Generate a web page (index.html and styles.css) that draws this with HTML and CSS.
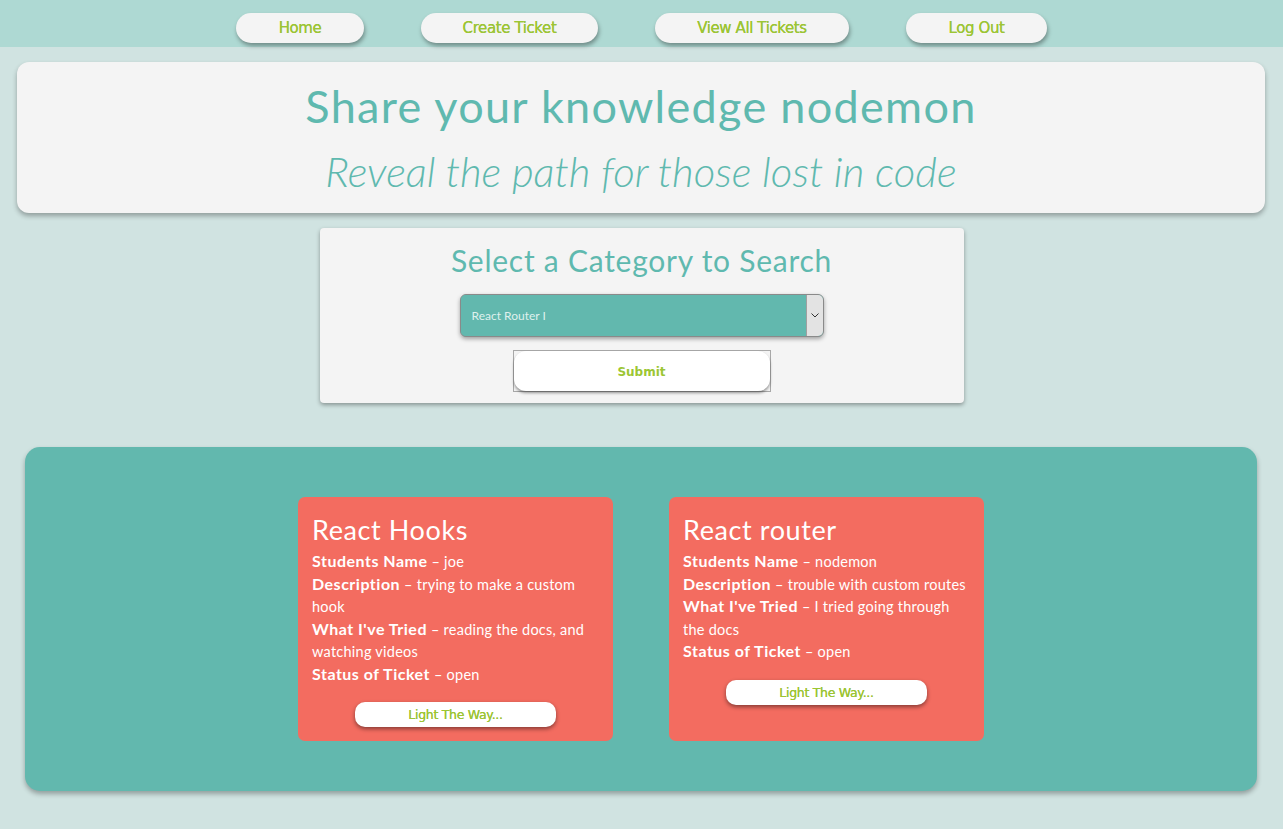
FILE: index.html
```html
<!DOCTYPE html>
<html lang="en">
<head>
<meta charset="utf-8">
<title>Share your knowledge</title>
<link rel="stylesheet" href="styles.css">
</head>
<body>
<nav class="nav">
  <a class="nav-btn nav-home" href="#">Home</a>
  <a class="nav-btn nav-create" href="#">Create Ticket</a>
  <a class="nav-btn nav-view" href="#">View All Tickets</a>
  <a class="nav-btn nav-logout" href="#">Log Out</a>
</nav>
<header class="hero">
  <h1 class="hero-title">Share your knowledge nodemon</h1>
  <p class="hero-sub">Reveal the path for those lost in code</p>
</header>
<section class="search">
  <h2 class="search-title">Select a Category to Search</h2>
  <div class="select-wrap">
    <select class="select">
      <option>React Router I</option>
    </select>
    <span class="select-arrow"><svg width="8" height="5" viewBox="0 0 8 5"><path d="M0.5 0.5 L4 4 L7.5 0.5" fill="none" stroke="#333" stroke-width="1"/></svg></span>
  </div>
  <span class="submit-frame"><button class="submit" type="button">Submit</button></span>
</section>
<main class="board">
  <article class="ticket">
    <h3 class="ticket-title">React Hooks</h3>
    <p class="line"><b>Students Name</b> – joe</p>
    <p class="line"><b>Description</b> – trying to make a custom hook</p>
    <p class="line"><b>What I've Tried</b> – reading the docs, and watching videos</p>
    <p class="line"><b>Status of Ticket</b> – open</p>
    <button class="light" type="button">Light The Way...</button>
  </article>
  <article class="ticket">
    <h3 class="ticket-title">React router</h3>
    <p class="line"><b>Students Name</b> – nodemon</p>
    <p class="line"><b>Description</b> – trouble with custom routes</p>
    <p class="line"><b>What I've Tried</b> – I tried going through the docs</p>
    <p class="line"><b>Status of Ticket</b> – open</p>
    <button class="light" type="button">Light The Way...</button>
  </article>
</main>
</body>
</html>
```
FILE: styles.css
```css
* { box-sizing: border-box; }
html, body { margin: 0; padding: 0; }
body {
  background: #d0e3e1;
  font-family: Lato, "Open Sans", sans-serif;
  min-height: 829px;
}
.nav {
  height: 47px;
  background: #aed9d3;
  display: flex;
  justify-content: center;
  align-items: flex-start;
  gap: 57px;
  padding-top: 13px;
}
.nav-btn {
  display: flex;
  align-items: center;
  justify-content: center;
  height: 30px;
  background: #f4f4f4;
  border-radius: 15px;
  box-shadow: 1px 3px 4px rgba(0,0,0,0.35);
  color: #9cc634;
  text-decoration: none;
  font-family: "DejaVu Sans", Verdana, sans-serif;
  font-size: 15px;
  letter-spacing: -0.4px;
  text-shadow: 0 0 0.6px #8fb52a;
}
.nav-home { width: 128px; }
.nav-create { width: 177px; }
.nav-view { width: 194px; }
.nav-logout { width: 141px; }

.hero {
  margin: 15px 18px 0 17px;
  height: 151px;
  background: #f4f4f4;
  border-radius: 12px;
  box-shadow: 0 3px 5px rgba(0,0,0,0.3);
  text-align: center;
  color: #5fb9af;
  padding-top: 17px;
}
.hero-title {
  margin: 0;
  font-weight: 400;
  font-size: 45px;
  line-height: 54px;
  letter-spacing: 1.3px;
}
.hero-sub {
  margin: 12px 0 0;
  font-weight: 300;
  font-style: italic;
  font-size: 42px;
  line-height: 52px;
}

.search {
  width: 644px;
  margin: 15px auto 0;
  height: 175px;
  background: #f4f4f4;
  border-radius: 4px;
  box-shadow: 0 2px 4px rgba(0,0,0,0.35);
  display: flex;
  flex-direction: column;
  align-items: center;
  padding-top: 13px;
}
.search-title {
  margin: 0;
  font-weight: 400;
  font-size: 30px;
  line-height: 38px;
  letter-spacing: 0.75px;
  color: #5fb9af;
}
.select-wrap {
  margin-top: 15px;
  width: 364px;
  height: 43px;
  display: flex;
  border: 1px solid #8a8a8a;
  border-radius: 6px;
  overflow: hidden;
  box-shadow: 0 2px 4px rgba(0,0,0,0.35);
  background: #62b8ae;
}
.select {
  flex: 1;
  appearance: none;
  -webkit-appearance: none;
  border: 0;
  background: #62b8ae;
  color: #dff0ed;
  font-family: Lato, sans-serif;
  font-size: 12px;
  padding: 0 11px;
  outline: none;
}
.select-arrow {
  width: 17px;
  background: #e3e3e3;
  border-left: 1px solid #a0a0a0;
  display: flex;
  align-items: center;
  justify-content: center;
}
.submit-frame {
  margin-top: 13px;
  width: 258px;
  height: 42px;
  border: 1px solid #a8a8a8;
  display: flex;
}
.submit {
  flex: 1;
  border: 0;
  background: #fff;
  border-radius: 12px;
  box-shadow: 0 2px 3px rgba(0,0,0,0.4);
  color: #9cc634;
  font-family: "DejaVu Sans", Verdana, sans-serif;
  font-weight: 700;
  font-size: 12px;
  padding-top: 3px;
}

.board {
  margin: 44px 26px 0 25px;
  height: 344px;
  background: #62b8ae;
  border-radius: 15px;
  box-shadow: 0 3px 5px rgba(0,0,0,0.3);
  display: flex;
  justify-content: center;
  align-items: stretch;
  gap: 56px;
  padding: 50px 0;
}
.ticket {
  width: 315px;
  background: #f36c60;
  border-radius: 7px;
  color: #fff;
  padding: 14px 14px 0;
  display: flex;
  flex-direction: column;
}
.ticket-title {
  margin: 0 0 2px;
  font-weight: 400;
  font-size: 27px;
  line-height: 38px;
  letter-spacing: 0.6px;
}
.line {
  margin: 0;
  font-size: 14.5px;
  line-height: 22.5px;
  font-weight: 400;
  letter-spacing: 0.25px;
}
.line b {
  font-size: 16px;
  line-height: 18px;
  font-weight: 700;
  letter-spacing: 0.5px;
}
.light {
  align-self: center;
  margin-top: 16px;
  width: 201px;
  height: 25px;
  border: 0;
  border-radius: 10px;
  background: #fff;
  box-shadow: 0 2px 4px rgba(0,0,0,0.45);
  color: #9cc634;
  font-family: "DejaVu Sans", Verdana, sans-serif;
  font-size: 12.5px;
  letter-spacing: -0.3px;
  text-shadow: 0 0 0.6px #8fb52a;
}
```
